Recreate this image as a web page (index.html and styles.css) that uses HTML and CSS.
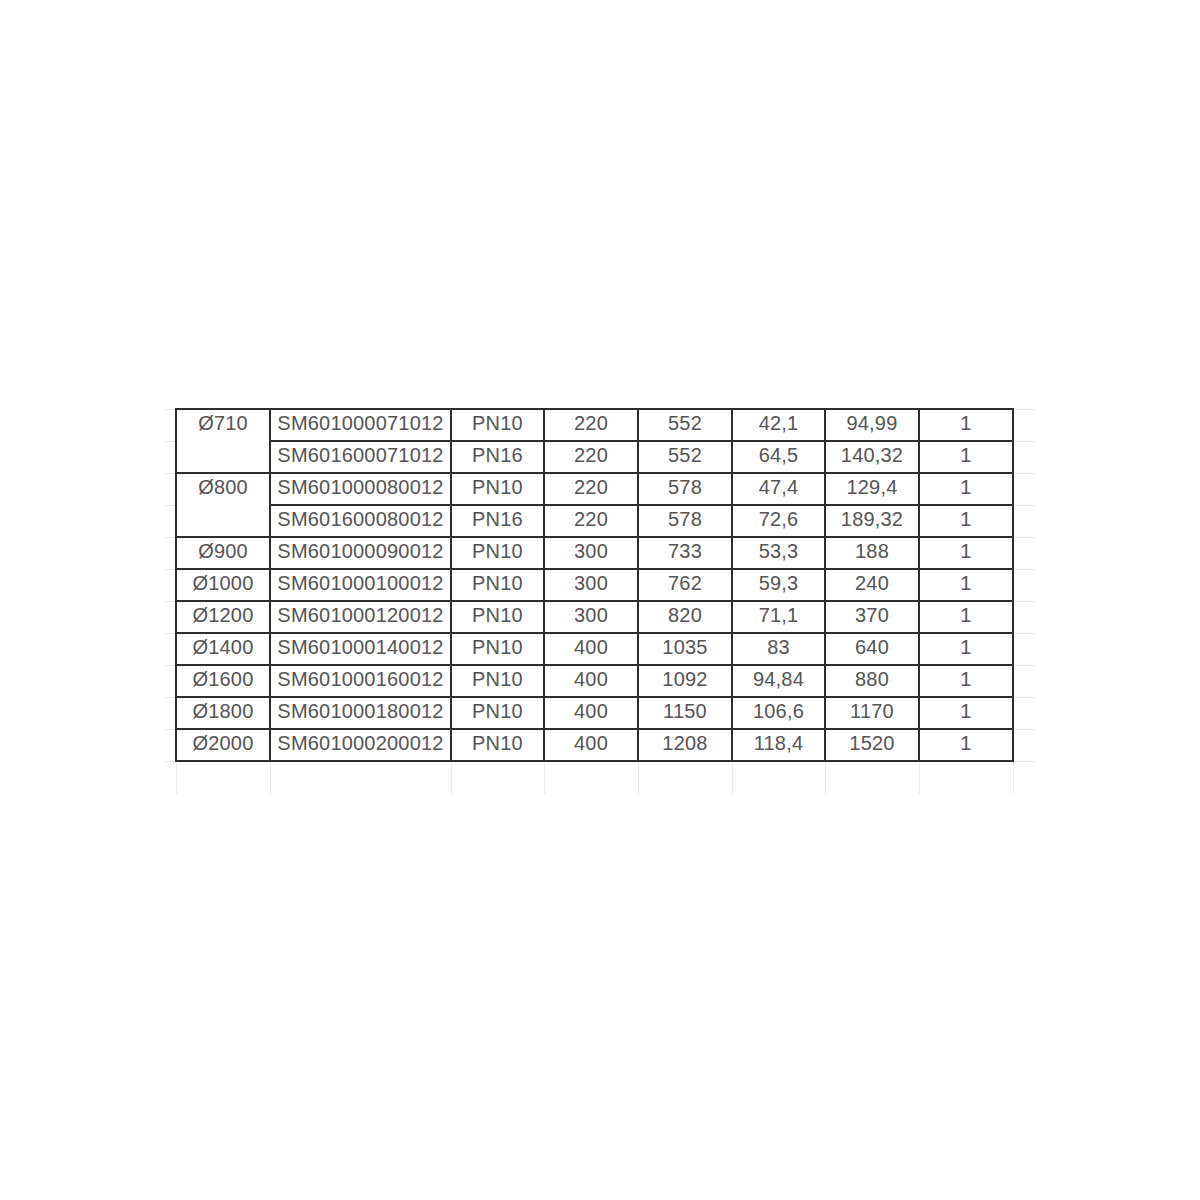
FILE: index.html
```html
<!DOCTYPE html>
<html>
<head>
<meta charset="utf-8">
<link rel="stylesheet" href="styles.css">
</head>
<body>
<div class="page">
<table class="sheet">
<colgroup>
<col class="c-stubl"><col class="c1"><col class="c2"><col class="c3"><col class="c4"><col class="c5"><col class="c6"><col class="c7"><col class="c8"><col class="c-stubr">
</colgroup>
<tbody>
<tr><td class="stub"></td><td rowspan="2" class="top">Ø710</td><td>SM601000071012</td><td>PN10</td><td>220</td><td>552</td><td>42,1</td><td>94,99</td><td>1</td><td class="stub"></td></tr>
<tr><td class="stub"></td><td>SM601600071012</td><td>PN16</td><td>220</td><td>552</td><td>64,5</td><td>140,32</td><td>1</td><td class="stub"></td></tr>
<tr><td class="stub"></td><td rowspan="2" class="top">Ø800</td><td>SM601000080012</td><td>PN10</td><td>220</td><td>578</td><td>47,4</td><td>129,4</td><td>1</td><td class="stub"></td></tr>
<tr><td class="stub"></td><td>SM601600080012</td><td>PN16</td><td>220</td><td>578</td><td>72,6</td><td>189,32</td><td>1</td><td class="stub"></td></tr>
<tr><td class="stub"></td><td>Ø900</td><td>SM601000090012</td><td>PN10</td><td>300</td><td>733</td><td>53,3</td><td>188</td><td>1</td><td class="stub"></td></tr>
<tr><td class="stub"></td><td>Ø1000</td><td>SM601000100012</td><td>PN10</td><td>300</td><td>762</td><td>59,3</td><td>240</td><td>1</td><td class="stub"></td></tr>
<tr><td class="stub"></td><td>Ø1200</td><td>SM601000120012</td><td>PN10</td><td>300</td><td>820</td><td>71,1</td><td>370</td><td>1</td><td class="stub"></td></tr>
<tr><td class="stub"></td><td>Ø1400</td><td>SM601000140012</td><td>PN10</td><td>400</td><td>1035</td><td>83</td><td>640</td><td>1</td><td class="stub"></td></tr>
<tr><td class="stub"></td><td>Ø1600</td><td>SM601000160012</td><td>PN10</td><td>400</td><td>1092</td><td>94,84</td><td>880</td><td>1</td><td class="stub"></td></tr>
<tr><td class="stub"></td><td>Ø1800</td><td>SM601000180012</td><td>PN10</td><td>400</td><td>1150</td><td>106,6</td><td>1170</td><td>1</td><td class="stub"></td></tr>
<tr class="last"><td class="stub"></td><td>Ø2000</td><td>SM601000200012</td><td>PN10</td><td>400</td><td>1208</td><td>118,4</td><td>1520</td><td>1</td><td class="stub"></td></tr>
<tr class="ghost"><td class="gstub"></td><td></td><td></td><td></td><td></td><td></td><td></td><td></td><td></td><td class="gstub"></td></tr>
</tbody>
</table>
</div>
</body>
</html>
```

FILE: styles.css
```css
html, body {
  margin: 0;
  padding: 0;
  background: #ffffff;
}

.page {
  width: 1200px;
  height: 1200px;
  padding-top: 408px;
  padding-left: 165px;
  box-sizing: border-box;
}

.sheet {
  border-collapse: collapse;
  table-layout: fixed;
  font-family: "Liberation Sans", Arial, sans-serif;
  font-size: 20px;
  letter-spacing: 0.2px;
  color: #555555;
}

.c-stubl { width: 11px; }
.c1 { width: 94px; }
.c2 { width: 181px; }
.c3 { width: 93px; }
.c4 { width: 94px; }
.c5 { width: 94px; }
.c6 { width: 93px; }
.c7 { width: 94px; }
.c8 { width: 94px; }
.c-stubr { width: 23px; }

.sheet tr {
  height: 32px;
}

.sheet td {
  border: 2px solid #2e2e2e;
  padding: 0 0 3px 0;
  text-align: center;
  vertical-align: middle;
  line-height: 27px;
  white-space: nowrap;
  overflow: hidden;
}

.sheet td.top {
  vertical-align: top;
}

.sheet td.stub {
  border-top: 1px solid #e6e6e6;
  border-bottom: 1px solid #e6e6e6;
  border-left: none;
  border-right: none;
}

.sheet tr.ghost {
  height: 33px;
}

.sheet tr.ghost td {
  border-top: none;
  border-bottom: none;
  border-left: 1px solid #ececec;
  border-right: 1px solid #ececec;
}

.sheet tr.ghost td.gstub {
  border-left: none;
  border-right: none;
}
```
